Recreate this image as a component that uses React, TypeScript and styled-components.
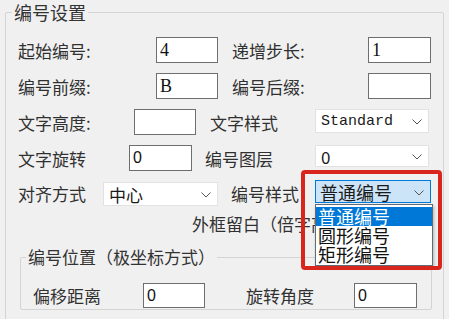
import React from 'react'
import styled, { createGlobalStyle } from 'styled-components'

/*
* Styles
*/

const GlobalStyle = createGlobalStyle`
  html, body {
    margin: 0;
    padding: 0;
    background: #f0f0f0;
    overflow: hidden;
  }
`

const Window = styled.div`
  box-sizing: border-box;
  width: 449px;
  height: 319px;
  overflow: hidden;
  padding: 2px 5px 0 5px;
  background: #f0f0f0;
  color: #303030;
  font-family: "Noto Sans CJK SC", "Noto Sans", sans-serif;
  font-size: 17px;
`

const Group = styled.fieldset<{ $inner?: boolean }>`
  min-width: 0;
  margin: ${p => (p.$inner ? '13px 0 0 2px' : '0')};
  padding: ${p => (p.$inner ? '0 12px 1px 12px' : '0 11px 10px 12px')};
  border: 1px solid #d4d4d4;
  border-radius: 2px;
`

const Legend = styled.legend<{ $inner?: boolean }>`
  margin-left: ${p => (p.$inner ? '-7px' : '-6px')};
  padding: 0 2px;
  font-size: ${p => (p.$inner ? '17px' : '18px')};
  line-height: 20px;
  color: #333;
`

const Rows = styled.div<{ $top: number }>`
  display: flex;
  flex-direction: column;
  padding-top: ${p => p.$top}px;
`

const Row = styled.div<{ $h: number; $mt?: number; $pl?: number }>`
  display: flex;
  align-items: flex-start;
  height: ${p => p.$h}px;
  margin-top: ${p => p.$mt ?? 0}px;
  padding-left: ${p => p.$pl ?? 0}px;
`

const Label = styled.span<{ $w: number; $ml?: number }>`
  display: flex;
  align-items: center;
  align-self: stretch;
  flex: none;
  width: ${p => p.$w}px;
  margin-left: ${p => p.$ml ?? 0}px;
  white-space: nowrap;
  line-height: 1;
`

const TextBox = styled.div<{ $w: number; $h: number; $serif?: boolean }>`
  box-sizing: border-box;
  display: flex;
  align-items: center;
  flex: none;
  width: ${p => p.$w}px;
  height: ${p => p.$h}px;
  padding-left: 3px;
  background: #fff;
  border: 1px solid #6e6e6e;
  color: #111;
  font-family: ${p =>
    p.$serif ? '"Liberation Serif", serif' : '"Liberation Sans", sans-serif'};
  font-size: ${p => (p.$serif ? '18px' : '16px')};
`

const SelectWrap = styled.div<{ $mt?: number }>`
  position: relative;
  flex: none;
  margin-top: ${p => p.$mt ?? 0}px;
`

const Select = styled.div<{ $w: number; $h: number; $active?: boolean; $mono?: boolean }>`
  box-sizing: border-box;
  display: flex;
  align-items: center;
  justify-content: space-between;
  width: ${p => p.$w}px;
  height: ${p => p.$h}px;
  padding: 0 6px 0 ${p => (p.$active ? 4 : 5)}px;
  background: ${p => (p.$active ? '#cce4f7' : '#fff')};
  border: 1px solid ${p => (p.$active ? '#0078d7' : '#e2e2e2')};
  color: #1a1a1a;
  font-family: ${p =>
    p.$mono
      ? '"Liberation Mono", monospace'
      : '"Noto Sans CJK SC", "Noto Sans", sans-serif'};
  font-size: ${p => (p.$mono ? '15px' : p.$active ? '18px' : '17px')};
  white-space: nowrap;
`

const Chevron = styled.svg`
  flex: none;
  width: 10px;
  height: 6px;
  margin-top: 2px;
`

const DropList = styled.div`
  position: absolute;
  top: calc(100% + 1px);
  left: 0;
  z-index: 2;
  box-sizing: border-box;
  width: 118px;
  padding: 2px 0 1px;
  background: #fff;
  border: 1px solid #5f6b78;
  box-shadow: 1px 2px 3px rgba(0, 0, 0, 0.25);
`

const Option = styled.div<{ $selected?: boolean }>`
  height: 19px;
  padding-left: 2px;
  background: ${p => (p.$selected ? '#0078d7' : 'transparent')};
  color: ${p => (p.$selected ? '#fff' : '#111')};
  font-size: 18px;
  line-height: 19px;
  white-space: nowrap;
`

const Highlight = styled.div`
  position: absolute;
  left: -14px;
  top: -10px;
  z-index: 3;
  box-sizing: border-box;
  width: 141px;
  height: 100px;
  border: 4px solid #d9261c;
  border-radius: 4px;
  pointer-events: none;
`

const Caption = styled.span`
  white-space: nowrap;
  line-height: 20px;
`

/*
* Components
*/

const Arrow = () => (
  <Chevron viewBox="0 0 10 6">
    <polyline points="0.5,0.5 5,5 9.5,0.5" fill="none" stroke="#555" strokeWidth="1" />
  </Chevron>
)

const styleOptions = ['普通编号', '圆形编号', '矩形编号']

export default function App() {
  return (
    <Window>
      <GlobalStyle />
      <Group>
        <Legend>编号设置</Legend>
        <Rows $top={15}>
          <Row $h={26}>
            <Label $w={138}>起始编号:</Label>
            <TextBox $w={62} $h={26} $serif>4</TextBox>
            <Label $w={136} $ml={14}>递增步长:</Label>
            <TextBox $w={63} $h={26} $serif>1</TextBox>
          </Row>
          <Row $h={26} $mt={10}>
            <Label $w={138}>编号前缀:</Label>
            <TextBox $w={62} $h={26} $serif>B</TextBox>
            <Label $w={136} $ml={14}>编号后缀:</Label>
            <TextBox $w={63} $h={26} />
          </Row>
          <Row $h={26} $mt={10}>
            <Label $w={116}>文字高度:</Label>
            <TextBox $w={62} $h={26} />
            <Label $w={105} $ml={14}>文字样式</Label>
            <SelectWrap>
              <Select $w={114} $h={24} $mono>
                Standard
                <Arrow />
              </Select>
            </SelectWrap>
          </Row>
          <Row $h={26} $mt={10}>
            <Label $w={111}>文字旋转</Label>
            <TextBox $w={63} $h={26}>0</TextBox>
            <Label $w={110} $ml={13}>编号图层</Label>
            <SelectWrap>
              <Select $w={114} $h={22}>
                0
                <Arrow />
              </Select>
            </SelectWrap>
          </Row>
          <Row $h={26} $mt={9}>
            <Label $w={85}>对齐方式</Label>
            <SelectWrap $mt={2}>
              <Select $w={115} $h={24}>
                中心
                <Arrow />
              </Select>
            </SelectWrap>
            <Label $w={84} $ml={13}>编号样式</Label>
            <SelectWrap>
              <Select $w={116} $h={23} $active>
                普通编号
                <Arrow />
              </Select>
              <DropList>
                {styleOptions.map((o, i) => (
                  <Option key={o} $selected={i === 0}>
                    {o}
                  </Option>
                ))}
              </DropList>
              <Highlight />
            </SelectWrap>
          </Row>
          <Row $h={20} $mt={8} $pl={174}>
            <Caption>外框留白（倍字高）:</Caption>
          </Row>
        </Rows>
        <Group $inner>
          <Legend $inner>编号位置（极坐标方式）</Legend>
          <Rows $top={16}>
            <Row $h={25}>
              <Label $w={110}>偏移距离</Label>
              <TextBox $w={62} $h={25}>0</TextBox>
              <Label $w={108} $ml={41}>旋转角度</Label>
              <TextBox $w={63} $h={25}>0</TextBox>
            </Row>
          </Rows>
        </Group>
      </Group>
    </Window>
  )
}
